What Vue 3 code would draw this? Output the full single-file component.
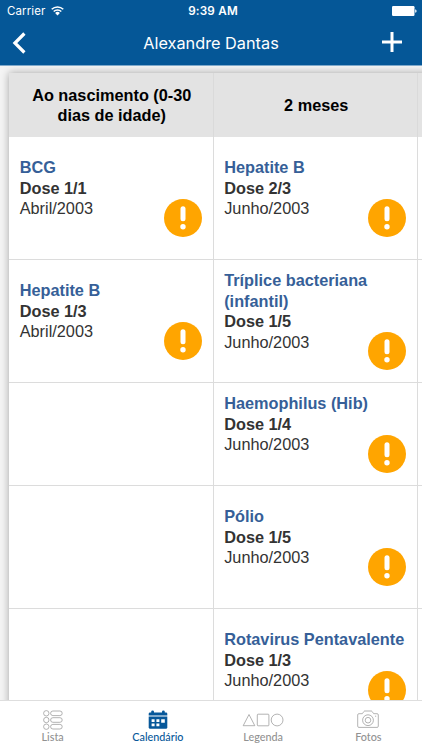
<script setup>
const columns = [
  {
    title: 'Ao nascimento (0-30 dias de idade)',
    cells: [
      { name: 'BCG', dose: 'Dose 1/1', date: 'Abril/2003' },
      { name: 'Hepatite B', dose: 'Dose 1/3', date: 'Abril/2003' },
      null,
      null,
      null,
    ],
  },
  {
    title: '2 meses',
    cells: [
      { name: 'Hepatite B', dose: 'Dose 2/3', date: 'Junho/2003' },
      { name: 'Tríplice bacteriana (infantil)', dose: 'Dose 1/5', date: 'Junho/2003', compact: true },
      { name: 'Haemophilus (Hib)', dose: 'Dose 1/4', date: 'Junho/2003', compact: true },
      { name: 'Pólio', dose: 'Dose 1/5', date: 'Junho/2003' },
      { name: 'Rotavirus Pentavalente', dose: 'Dose 1/3', date: 'Junho/2003' },
    ],
  },
  { title: '', cells: [null, null, null, null, null] },
]
</script>

<template>
  <div class="screen">
    <header class="top">
      <div class="status">
        <div class="carrier">
          <span class="carrier-name">Carrier</span>
          <svg class="wifi" width="13" height="10" viewBox="0 0 13 10">
            <path d="M.7 3.3A8.3 8.3 0 0 1 12.3 3.3M2.7 5.5A5.4 5.4 0 0 1 10.3 5.5" fill="none" stroke="#fff" stroke-width="1.5" />
            <path d="M6.5 9.4 4.1 6.9A3.4 3.4 0 0 1 8.9 6.9Z" fill="#fff" />
          </svg>
        </div>
        <span class="clock">9:39 AM</span>
        <svg class="battery" width="25" height="10" viewBox="0 0 25 10">
          <rect x="0" y="0" width="22.5" height="10" rx="1.2" fill="#fff" />
          <path d="M23.2 3.2Q24.6 3.6 24.6 5T23.2 6.8Z" fill="#fff" />
        </svg>
      </div>
      <div class="nav">
        <svg class="back" width="14" height="22" viewBox="0 0 14 22">
          <path d="M12.4 1.5 2.9 11 12.4 20.5" fill="none" stroke="#fff" stroke-width="3.2" />
        </svg>
        <h1>Alexandre Dantas</h1>
        <svg class="plus" width="20" height="20" viewBox="0 0 20 20">
          <path d="M10 0V20M0 10H20" stroke="#fff" stroke-width="3" />
        </svg>
      </div>
    </header>

    <main class="content">
      <div class="table">
        <section v-for="(col, c) in columns" :key="c" class="column">
          <h2><span>{{ col.title }}</span></h2>
          <div v-for="(cell, r) in col.cells" :key="r" class="cell" :class="{ compact: cell && cell.compact }">
            <template v-if="cell">
              <strong class="name">{{ cell.name }}</strong>
              <strong class="dose">{{ cell.dose }}</strong>
              <span class="date">{{ cell.date }}</span>
              <svg class="alert" width="38" height="38" viewBox="0 0 38 38">
                <circle cx="19" cy="19" r="19" fill="#ffa500" />
                <path d="M19 9.7V19.8" stroke="#fff" stroke-width="5" stroke-linecap="round" />
                <circle cx="19" cy="27.7" r="2.7" fill="#fff" />
              </svg>
            </template>
          </div>
        </section>
      </div>
    </main>

    <nav class="tabs">
      <div class="tab">
        <svg width="20" height="20" viewBox="0 0 20 20" fill="none" stroke="#a0a0a0" stroke-width=".8">
          <circle cx="3.3" cy="3.3" r="2.7" /><rect x="7.6" y="1" width="11.6" height="4.6" rx="2.3" />
          <circle cx="3.3" cy="10" r="2.7" /><rect x="7.6" y="7.7" width="11.6" height="4.6" rx="2.3" />
          <circle cx="3.3" cy="16.7" r="2.7" /><rect x="7.6" y="14.4" width="11.6" height="4.6" rx="2.3" />
        </svg>
        <span>Lista</span>
      </div>
      <div class="tab active">
        <svg width="20" height="20" viewBox="0 0 20 20">
          <path d="M.7 5.4V3.8Q.7 2.5 2 2.5H3.2V1.8A1.4 1.4 0 0 1 6 1.8V2.5H14V1.8A1.4 1.4 0 0 1 16.8 1.8V2.5H18Q19.3 2.5 19.3 3.8V5.4Z" fill="#07589a" />
          <path d="M.7 6.5H19.3V17.2Q19.3 18.7 17.8 18.7H2.2Q.7 18.7 .7 17.2Z" fill="#07589a" />
          <path d="M3.6 9.3H6.6V12H3.6ZM8.4 9.3H11.4V12H8.4ZM13.2 9.3H16.8V12.8H13.2ZM3.6 13.6H6.6V16.3H3.6ZM8.4 13.6H11.4V16.3H8.4Z" fill="#fff" />
        </svg>
        <span>Calendário</span>
      </div>
      <div class="tab">
        <svg width="42" height="20" viewBox="0 0 42 20" fill="none" stroke="#a0a0a0" stroke-width=".8" stroke-linejoin="round">
          <path d="M7 4.5 1.2 15.7H12.8Z" />
          <rect x="15.3" y="4.2" width="11.6" height="11.6" rx=".8" />
          <circle cx="35.1" cy="10" r="5.9" />
        </svg>
        <span>Legenda</span>
      </div>
      <div class="tab">
        <svg width="22" height="20" viewBox="0 0 22 20" fill="none" stroke="#a0a0a0" stroke-width=".8">
          <path d="M1.9 3.7H5.3L7 1.4Q7.3 1 7.8 1H14.2Q14.7 1 15 1.4L16.7 3.7H20.1Q21.3 3.7 21.3 4.9V16.2Q21.3 17.4 20.1 17.4H1.9Q.7 17.4 .7 16.2V4.9Q.7 3.7 1.9 3.7Z" />
          <circle cx="11" cy="10.2" r="5.4" /><circle cx="11" cy="10.2" r="2.8" />
          <path d="M18 6.2H19.2" />
        </svg>
        <span>Fotos</span>
      </div>
    </nav>
  </div>
</template>

<style>
body { margin: 0; overflow: hidden; }
</style>

<style scoped>
.screen {
  display: flex;
  flex-direction: column;
  width: 422px;
  height: 750px;
  overflow: hidden;
  font-family: "Liberation Sans", Arial, sans-serif;
}
.top {
  flex: none;
  box-sizing: border-box;
  height: 66px;
  background: #055797;
  border-bottom: 1px solid #7fa9cb;
  color: #fff;
  font-family: Inter, sans-serif;
}
.status {
  display: grid;
  grid-template-columns: 1fr auto 1fr;
  align-items: center;
  height: 21px;
  padding: 0 6px 0 7px;
  font-size: 11.5px;
}
.carrier { display: flex; align-items: center; gap: 5.5px; }
.carrier-name { letter-spacing: .1px; }
.clock { font-weight: 600; font-size: 11.7px; letter-spacing: .2px; margin-left: 3px; }
.battery { justify-self: end; margin-right: -1px; }
.nav {
  display: grid;
  grid-template-columns: 1fr auto 1fr;
  align-items: center;
  height: 43px;
  padding: 0 20px 0 12px;
}
h1 { margin: 0 0 0 8px; font-size: 16.3px; font-weight: 400; }
.plus { justify-self: end; margin-top: -2px; }
.content {
  flex: 1;
  min-height: 0;
  overflow: hidden;
  padding: 7px 0 0 9px;
  background: #f4f4f4;
}
.table {
  display: flex;
  width: 614px;
  background: #fff;
  box-shadow: 0 0 8px rgba(0, 0, 0, .33);
}
.column { flex: none; width: 204.5px; }
h2 {
  box-sizing: border-box;
  display: flex;
  align-items: center;
  justify-content: center;
  height: 64px;
  margin: 0;
  padding: 0 14px 0 16px;
  border-right: 1px solid #dadada;
  background: #e3e3e3;
  font-size: 16.3px;
  line-height: 20.5px;
  text-align: center;
  color: #000;
}
.cell {
  box-sizing: border-box;
  display: flex;
  flex-direction: column;
  height: 123px;
  padding: 20.4px 0 0 10.7px;
  border-right: 1px solid #dcdcdc;
  border-bottom: 1px solid #dcdcdc;
  font-size: 16.3px;
  line-height: 20.5px;
  color: #333;
}
.cell:nth-child(4) { height: 103px; }
.cell.compact { padding-top: 10.4px; }
.name { color: #365f98; }
.alert { flex: none; align-self: flex-end; margin: -20.2px 11px 0 0; }
.tabs {
  flex: none;
  box-sizing: border-box;
  display: grid;
  grid-template-columns: repeat(4, 1fr);
  height: 50px;
  padding-right: 1px;
  border-top: 1px solid #dedede;
  background: #fff;
  color: #929292;
}
.tab {
  display: flex;
  flex-direction: column;
  align-items: center;
  padding-top: 9px;
  font-family: Lato, sans-serif;
  font-size: 10.8px;
  font-weight: 500;
  line-height: 14px;
}
.active { color: #07589a; }
</style>
